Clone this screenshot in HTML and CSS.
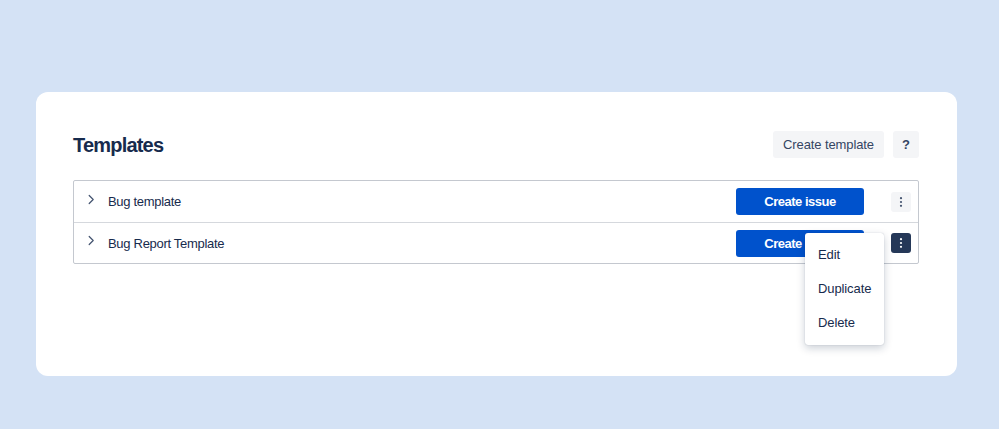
FILE: index.html
```html
<!DOCTYPE html>
<html>
<head>
<meta charset="utf-8">
<link rel="stylesheet" href="styles.css">
</head>
<body>
<div class="card">
  <div class="header">
    <h1 class="title">Templates</h1>
    <div class="actions">
      <button class="btn btn-subtle">Create template</button>
      <button class="btn btn-subtle btn-help">?</button>
    </div>
  </div>
  <div class="table">
    <div class="row">
      <svg class="chev" width="8" height="12" viewBox="0 0 8 12"><path d="M2.2 1.5 L6.2 5.5 L2.2 9.5" fill="none" stroke="#42526e" stroke-width="1.2" stroke-linecap="round" stroke-linejoin="round"/></svg>
      <span class="name">Bug template</span>
      <button class="btn btn-primary">Create issue</button>
      <div class="kebab-wrap">
        <button class="kebab"><svg width="4" height="12" viewBox="0 0 4 12"><circle cx="2" cy="2.2" r="1.1" fill="#42526e"/><circle cx="2" cy="6" r="1.1" fill="#42526e"/><circle cx="2" cy="9.8" r="1.1" fill="#42526e"/></svg></button>
      </div>
    </div>
    <div class="row">
      <svg class="chev" width="8" height="12" viewBox="0 0 8 12"><path d="M2.2 1.5 L6.2 5.5 L2.2 9.5" fill="none" stroke="#42526e" stroke-width="1.2" stroke-linecap="round" stroke-linejoin="round"/></svg>
      <span class="name">Bug Report Template</span>
      <button class="btn btn-primary">Create issue</button>
      <div class="kebab-wrap">
        <button class="kebab kebab-active"><svg width="4" height="12" viewBox="0 0 4 12"><circle cx="2" cy="2.2" r="1.1" fill="#fff"/><circle cx="2" cy="6" r="1.1" fill="#fff"/><circle cx="2" cy="9.8" r="1.1" fill="#fff"/></svg></button>
        <div class="menu">
          <div class="item">Edit</div>
          <div class="item">Duplicate</div>
          <div class="item">Delete</div>
        </div>
      </div>
    </div>
  </div>
</div>
</body>
</html>
```
FILE: styles.css
```css
* { box-sizing: border-box; }
html, body { margin: 0; padding: 0; }
body {
  background: #d4e2f5;
  font-family: "Liberation Sans", Arial, sans-serif;
  color: #172b4d;
  width: 999px;
  height: 429px;
  overflow: hidden;
  padding-top: 92px;
  padding-left: 36px;
}
.card {
  width: 921px;
  height: 284px;
  background: #fff;
  border-radius: 12px;
  padding: 39px 38px 0 37px;
}
.header {
  display: flex;
  align-items: center;
  justify-content: space-between;
  height: 27px;
}
.title {
  margin: 0;
  font-size: 20px;
  font-weight: bold;
  letter-spacing: -0.8px;
  color: #172b4d;
  position: relative;
  top: 1px;
}
.actions {
  display: flex;
  gap: 9px;
}
.btn {
  font-family: inherit;
  border: none;
  border-radius: 3px;
  height: 27px;
  font-size: 13px;
  cursor: pointer;
  padding: 0;
}
.btn-subtle {
  background: #f4f5f7;
  color: #344563;
  width: 111px;
  letter-spacing: -0.1px;
}
.btn-help {
  width: 26px;
  font-weight: bold;
}
.table {
  margin-top: 22px;
  border: 1px solid #c4c8cf;
  border-radius: 2px;
}
.row {
  display: flex;
  align-items: center;
  height: 41px;
  padding: 0 7px 0 13px;
}
.row + .row {
  border-top: 1px solid #d5d8dd;
  height: 41px;
}
.chev { flex: none; position: relative; top: -2px; }
.name {
  margin-left: 13px;
  font-size: 13px;
  letter-spacing: -0.3px;
  color: #172b4d;
  flex: 1;
}
.btn-primary {
  background: #0052cc;
  color: #fff;
  font-weight: bold;
  letter-spacing: -0.5px;
  width: 128px;
}
.kebab-wrap {
  position: relative;
  margin-left: 27px;
  width: 20px;
  height: 20px;
}
.kebab {
  width: 20px;
  height: 20px;
  border: none;
  border-radius: 3px;
  background: #f4f5f7;
  display: flex;
  align-items: center;
  justify-content: center;
  padding: 0;
}
.kebab-active { background: #253858; }
.menu {
  position: absolute;
  top: 0;
  right: 27px;
  width: 79px;
  background: #fff;
  border-radius: 3px;
  box-shadow: 0 3px 8px rgba(9, 30, 66, 0.22), 0 0 1px rgba(9, 30, 66, 0.3);
  padding: 5px 0;
  z-index: 5;
}
.item {
  height: 34px;
  line-height: 34px;
  padding-left: 13px;
  font-size: 13px;
  letter-spacing: -0.1px;
  color: #172b4d;
}
```
